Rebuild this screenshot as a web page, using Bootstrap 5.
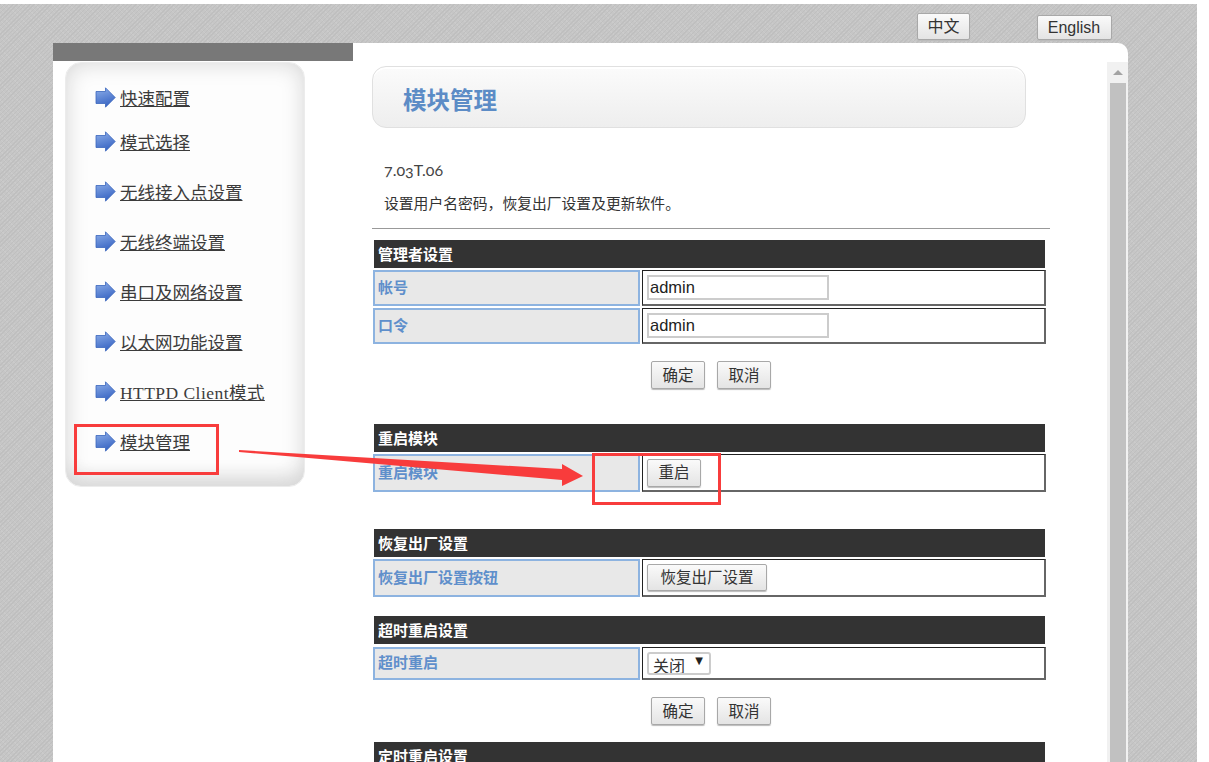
<!doctype html>
<html lang="zh-CN">
<head>
<meta charset="utf-8">
<title>模块管理</title>
<link href="https://cdn.jsdelivr.net/npm/bootstrap@5.3.0/dist/css/bootstrap.min.css" rel="stylesheet">
<style>
html,body{margin:0;height:762px;overflow:hidden;background:#fff}
body{font-family:"Liberation Serif","Noto Sans CJK SC",serif;color:#333}
.stage{position:relative;width:1209px;height:762px;overflow:hidden}
.canvas{width:1197px;height:758px;margin-top:4px;background-color:#c6c6c6;
 background-image:repeating-linear-gradient(135deg,#bfbfbf 0 1px,transparent 1px 3px),repeating-linear-gradient(45deg,#cbcbcb 0 1px,transparent 1px 4px)}
.lang-bar{height:39px;padding:9px 85px 0 0;gap:67px}
.old-btn{font:16px/1 "Liberation Sans","Noto Sans CJK SC",sans-serif;color:#333;background:linear-gradient(#fafafa,#e4e4e4);border:1px solid #a8a8a8;border-radius:2px;box-shadow:0 1px 1px #bbb;padding:1px 0 0;height:26px}
.btn-zh{width:53px;height:27px}
.btn-en{width:75px;height:25px;margin-top:2px;padding:0 1px 0 0}
.btn-restart{width:54px;height:28px;font-size:15.5px}
.btn-factory{width:120px;height:27px;font-size:15.5px}
.shell{margin-left:53px;width:1075px;height:719px;background:#fff;border-top-right-radius:10px}
.side-col{width:300px;flex:none}
.side-top{height:18px;background:#787878}
.side-panel{margin:1px 0 0 12px;width:240px;height:425px;background:#fdfdfd;border-radius:16px;box-shadow:inset 0 0 22px #d4d4d4,inset 0 -24px 18px -14px #e2e2e2;border:1px solid #ececec;padding:19px 0 0 29px}
.side-item{height:50px}
.side-item.short{height:44px}
.side-item a{font-size:17.5px;line-height:34px;color:#3c3c3c;text-decoration:underline;white-space:nowrap}
.side-item a.wide{letter-spacing:.45px}
.side-item svg{width:21px;height:21px;flex:none;margin:5px 4px 0 0}
.main-col{width:678px;margin-left:19px;flex:none;padding-top:23px}
.head-box{width:654px;height:62px;border:1px solid #e0e0e0;border-radius:14px;background:linear-gradient(#fbfbfb,#eeeeee);box-shadow:inset 0 2px 0 #fff;padding-left:30px;line-height:68px;font-size:23.5px;font-weight:700;color:#5c8cc6}
.ver{margin:32px 0 0 12px;font-family:"Lato","Liberation Serif",serif;font-size:16px;line-height:20px;font-feature-settings:"onum";color:#444}
.desc{margin:14px 0 0 12px;font-size:14.8px;line-height:20px;color:#333}
.rule{height:1px;background:#999;margin:14px 0 11px;opacity:1;border:0;width:678px}
.tbl{width:673px;margin-left:1px}
.sec-head{height:28px;margin-left:1px;width:671px;background:#333;color:#fff;font-weight:700;font-size:15px;line-height:30px;padding-left:4px}
.tbl-row{gap:2px;margin-top:2px}
.tbl-row.h36{height:36px}
.tbl-row.h38{height:38px}
.tbl-row.h33{height:33px}
.cell-l{width:267px;flex:none;background:#e8e8e8;border:2px solid #8db3e0;color:#5f8fcb;font-weight:700;font-size:15px;padding:0 0 0 3px}
.cell-r{width:404px;flex:none;border:1px solid #222;border-right:2px solid #666;border-bottom:2px solid #666;padding-left:4px}
.txt{width:182px;height:25px;border:2px solid #ccc;padding:0 1px;font:16.5px "Liberation Sans",sans-serif;color:#222;background:#fff;outline:0}
.pick-wrap{position:relative;width:64px;height:23px}
.pick-wrap::after{content:"▼";position:absolute;right:8px;top:3px;font:10px/12px "DejaVu Sans",sans-serif;color:#222;pointer-events:none}
.pick{display:block;appearance:none;-webkit-appearance:none;width:64px;height:23px;font:16px/21px "Noto Sans CJK SC",sans-serif;color:#333;border:2px solid #ccc;border-radius:3px;background:#fff;padding:1px 0 0 4px;outline:0}
.act{gap:12px;margin-top:17px}
.act .old-btn{width:54px;height:28px;font-size:15.5px}
.sb{width:21px;margin:19px 0 0 auto;background:#f1f1f1;flex:none;position:relative;padding:21px 2px 0 3px}
.sb-up{position:absolute;left:6px;top:8px;width:0;height:0;border:5px solid transparent;border-top:0;border-bottom:5px solid #a3a3a3}
.sb-thumb{height:100%;background:#c1c1c1}
.mark-box{position:absolute;border:3px solid #f83c3c}
.mb1{left:74px;top:424px;width:145px;height:51px}
.mb2{left:592px;top:453px;width:129px;height:52px}
.mark-arrow{position:absolute;left:230px;top:440px;width:370px;height:60px}
.gap35{margin-top:35px}.gap37{margin-top:37px}.gap19{margin-top:19px}.gap17{margin-top:17px}
.m3{margin-top:3px}
</style>
</head>
<body>
<div class="stage">
 <div class="canvas">
  <div class="lang-bar d-flex justify-content-end align-items-start">
   <button class="old-btn btn-zh" type="button">中文</button>
   <button class="old-btn btn-en" type="button">English</button>
  </div>
  <div class="shell d-flex">
   <aside class="side-col">
    <div class="side-top"></div>
    <div class="side-panel">
     <div class="side-item short d-flex align-items-start"><svg viewBox="0 0 21 21"><use href="#ar"/></svg><a href="#">快速配置</a></div>
     <div class="side-item d-flex align-items-start"><svg viewBox="0 0 21 21"><use href="#ar"/></svg><a href="#">模式选择</a></div>
     <div class="side-item d-flex align-items-start"><svg viewBox="0 0 21 21"><use href="#ar"/></svg><a href="#">无线接入点设置</a></div>
     <div class="side-item d-flex align-items-start"><svg viewBox="0 0 21 21"><use href="#ar"/></svg><a href="#">无线终端设置</a></div>
     <div class="side-item d-flex align-items-start"><svg viewBox="0 0 21 21"><use href="#ar"/></svg><a href="#">串口及网络设置</a></div>
     <div class="side-item d-flex align-items-start"><svg viewBox="0 0 21 21"><use href="#ar"/></svg><a href="#">以太网功能设置</a></div>
     <div class="side-item d-flex align-items-start"><svg viewBox="0 0 21 21"><use href="#ar"/></svg><a class="wide" href="#">HTTPD Client模式</a></div>
     <div class="side-item d-flex align-items-start"><svg viewBox="0 0 21 21"><use href="#ar"/></svg><a href="#">模块管理</a></div>
    </div>
   </aside>
   <main class="main-col">
    <div class="head-box">模块管理</div>
    <div class="ver">7.03T.06</div>
    <div class="desc">设置用户名密码，恢复出厂设置及更新软件。</div>
    <hr class="rule">
    <div class="tbl">
     <div class="sec-head">管理者设置</div>
     <div class="tbl-row h36 d-flex"><div class="cell-l d-flex align-items-center">帐号</div><div class="cell-r d-flex align-items-center"><input class="txt" value="admin"></div></div>
     <div class="tbl-row h36 d-flex"><div class="cell-l d-flex align-items-center">口令</div><div class="cell-r d-flex align-items-center"><input class="txt" value="admin"></div></div>
    </div>
    <div class="act d-flex justify-content-center"><button class="old-btn" type="button">确定</button><button class="old-btn" type="button">取消</button></div>
    <div class="tbl gap35">
     <div class="sec-head">重启模块</div>
     <div class="tbl-row h38 d-flex"><div class="cell-l d-flex align-items-center">重启模块</div><div class="cell-r d-flex align-items-center"><button class="old-btn btn-restart" type="button">重启</button></div></div>
    </div>
    <div class="tbl gap37">
     <div class="sec-head">恢复出厂设置</div>
     <div class="tbl-row h38 d-flex"><div class="cell-l d-flex align-items-center">恢复出厂设置按钮</div><div class="cell-r d-flex align-items-center"><button class="old-btn btn-factory" type="button">恢复出厂设置</button></div></div>
    </div>
    <div class="tbl gap19">
     <div class="sec-head">超时重启设置</div>
     <div class="tbl-row h33 d-flex m3"><div class="cell-l d-flex align-items-center">超时重启</div><div class="cell-r d-flex align-items-center"><div class="pick-wrap"><select class="pick"><option>关闭</option></select></div></div></div>
    </div>
    <div class="act d-flex justify-content-center"><button class="old-btn" type="button">确定</button><button class="old-btn" type="button">取消</button></div>
    <div class="tbl gap17">
     <div class="sec-head">定时重启设置</div>
    </div>
   </main>
   <div class="sb"><span class="sb-up"></span><div class="sb-thumb"></div></div>
  </div>
 </div>
 <div class="mark-box mb1"></div>
 <div class="mark-box mb2"></div>
 <svg class="mark-arrow" viewBox="230 440 370 60"><polygon points="239,450 562,469 562,464 583,476 562,486 562,480 239,452" fill="#f83c3c"/></svg>
</div>
<svg width="0" height="0" class="d-block position-absolute">
 <defs>
  <linearGradient id="ag" x1="0" y1="0" x2="0.300" y2="1"><stop offset="0" stop-color="#8fb0ea"/><stop offset="1" stop-color="#3b67c4"/></linearGradient>
  <symbol id="ar" viewBox="0 0 21 21"><path d="M1 4.500H10.500V.8L20.200 10.500L10.500 20.200V16.500H1Z" fill="url(#ag)" stroke="#3a66bd" stroke-width=".8"/></symbol>
 </defs>
</svg>
</body>
</html>
